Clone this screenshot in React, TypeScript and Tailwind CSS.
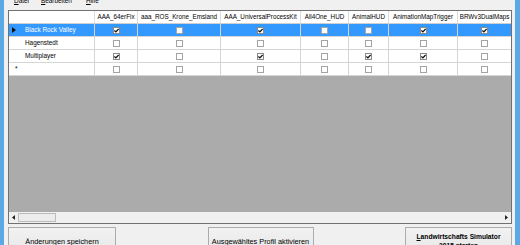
import React from "react";

const cols: { name: string; w: string; last?: boolean }[] = [
  { name: "AAA_64erFix", w: "w-[43px]" },
  { name: "aaa_ROS_Krone_Emsland", w: "w-[83px]" },
  { name: "AAA_UniversalProcessKit", w: "w-[80px]" },
  { name: "All4One_HUD", w: "w-[48px]" },
  { name: "AnimalHUD", w: "w-[40px]" },
  { name: "AnimationMapTrigger", w: "w-[69px]" },
  { name: "BRWv3DualMaps", w: "w-[53px]", last: true },
];

const rows: { name: string; sel?: boolean; isNew?: boolean; v: number[] }[] = [
  { name: "Black Rock Valley", sel: true, v: [1, 0, 1, 0, 0, 1, 1] },
  { name: "Hagenstedt", v: [0, 0, 0, 0, 0, 0, 0] },
  { name: "Multiplayer", v: [1, 0, 1, 0, 1, 1, 0] },
  { name: "", isNew: true, v: [0, 0, 0, 0, 0, 0, 0] },
];

function Check({ on }: { on: boolean }) {
  return (
    <div
      className={`flex h-[7px] w-[7px] items-center justify-center border bg-white ${on ? "border-[#8a8a8a]" : "border-[#a4a4a4]"}`}
    >
      {on && (
        <svg width="5" height="5" viewBox="0 0 5 5">
          <path d="M0.4 2.4 L1.9 3.9 L4.6 0.9" stroke="#111" strokeWidth="1.3" fill="none" />
        </svg>
      )}
    </div>
  );
}

export default function App() {
  const font = { fontFamily: '"Liberation Sans", Arial, sans-serif' };
  return (
    <div className="flex h-[245px] w-[520px] overflow-hidden bg-[#f0f0f0] text-black" style={font}>
      <div className="w-[4px] shrink-0 bg-[#5aa8e4]" />
      <div className="flex w-[511px] shrink-0 flex-col pl-[4px] pr-[3px]">
        {/* menu bar */}
        <div className="h-[10px] shrink-0 overflow-hidden">
          <div className="-mt-[3px] flex pl-[6px] text-[6.4px] leading-[8px]">
            <span className="w-[27px]">
              <span className="underline">D</span>atei
            </span>
            <span className="w-[45px]">
              <span className="underline">B</span>earbeiten
            </span>
            <span>
              <span className="underline">H</span>ilfe
            </span>
          </div>
        </div>
        {/* grid */}
        <div className="flex h-[214px] w-[504px] shrink-0 flex-col border border-[#717171]">
          <div className="flex h-[13px] shrink-0 border-b border-[#cfcfcf] bg-white text-[6.3px] leading-[8px]">
            <div className="w-[86px] border-r border-[#dcdcdc]" />
            {cols.map((c) => (
              <div
                key={c.name}
                className={`flex items-center justify-center whitespace-nowrap ${c.w} ${c.last ? "" : "border-r border-[#dcdcdc]"}`}
              >
                {c.name}
              </div>
            ))}
          </div>
          {rows.map((r, i) => (
            <div
              key={i}
              className={`flex h-[13px] shrink-0 text-[6.4px] leading-[8px] ${r.sel ? "bg-[#3399ff] text-white" : "bg-white"}`}
            >
              <div className="flex w-[86px] items-center border-r border-b border-[#d5d5d5]">
                <div className="flex w-[16px] items-center pl-[3px]">
                  {r.sel && (
                    <svg width="4" height="6" viewBox="0 0 4 6">
                      <polygon points="0,0 4,3 0,6" fill="#111" />
                    </svg>
                  )}
                  {r.isNew && <span className="pl-[3px] text-[6.4px] text-black">*</span>}
                </div>
                <span className="whitespace-nowrap">{r.name}</span>
              </div>
              {cols.map((c, j) => (
                <div
                  key={c.name}
                  className={`flex items-center justify-center border-b border-[#d5d5d5] ${c.w} ${c.last ? "" : "border-r"}`}
                >
                  <Check on={r.v[j] === 1} />
                </div>
              ))}
            </div>
          ))}
          <div className="flex-1 bg-[#ababab]" />
          {/* horizontal scrollbar */}
          <div className="flex h-[11px] shrink-0 items-stretch bg-[#f0f0f0]">
            <div className="flex w-[9px] items-center justify-center">
              <svg width="3" height="5" viewBox="0 0 3 5">
                <polygon points="3,0 0,2.5 3,5" fill="#222" />
              </svg>
            </div>
            <div className="my-[1px] w-[38px] border border-[#bcbcbc] bg-[#ececec]" />
            <div className="flex-1" />
            <div className="flex w-[9px] items-center justify-center">
              <svg width="3" height="5" viewBox="0 0 3 5">
                <polygon points="0,0 3,2.5 0,5" fill="#222" />
              </svg>
            </div>
          </div>
        </div>
        {/* buttons */}
        <div className="mt-[3px] flex w-[504px] shrink-0 justify-between">
          <div className="flex h-[28px] w-[108px] items-center justify-center border border-[#acacac] bg-gradient-to-b from-[#f2f2f2] to-[#e6e6e6] text-[7.3px] leading-[9px] whitespace-nowrap">
            Änderungen speichern
          </div>
          <div className="flex h-[28px] w-[106px] items-center justify-center border border-[#acacac] bg-gradient-to-b from-[#f2f2f2] to-[#e6e6e6] text-[7.3px] leading-[9px] whitespace-nowrap">
            Ausgewähltes Profil aktivieren
          </div>
          <div className="flex h-[28px] w-[107px] flex-col items-center justify-center border border-[#acacac] bg-gradient-to-b from-[#f2f2f2] to-[#e6e6e6] text-[6.7px] font-bold leading-[9px] whitespace-nowrap">
            <span>
              <span className="underline">L</span>andwirtschafts Simulator
            </span>
            <span>2015 starten</span>
          </div>
        </div>
      </div>
      <div className="w-[5px] shrink-0 bg-[#5aa8e4]" />
    </div>
  );
}
